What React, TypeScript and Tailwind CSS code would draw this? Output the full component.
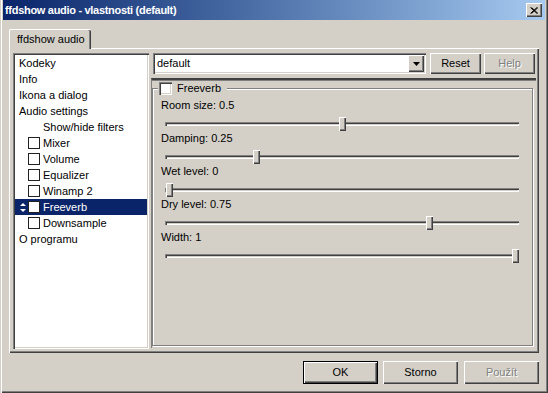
import React from 'react';

const raised =
  'bg-[#d4d0c8] shadow-[inset_1px_1px_0_#fff,inset_-1px_-1px_0_#404040,inset_-2px_-2px_0_#808080]';
const sunken =
  'shadow-[inset_1px_1px_0_#808080,inset_2px_2px_0_#404040,inset_-1px_-1px_0_#fff,inset_-2px_-2px_0_#d4d0c8]';
const disabledText = 'text-[#808080] [text-shadow:1px_1px_0_#fff]';

type Node = { label: string; check?: boolean; indent?: boolean; selected?: boolean };

const tree: Node[] = [
  { label: 'Kodeky' },
  { label: 'Info' },
  { label: 'Ikona a dialog' },
  { label: 'Audio settings' },
  { label: 'Show/hide filters', indent: true },
  { label: 'Mixer', check: true },
  { label: 'Volume', check: true },
  { label: 'Equalizer', check: true },
  { label: 'Winamp 2', check: true },
  { label: 'Freeverb', check: true, selected: true },
  { label: 'Downsample', check: true },
  { label: 'O programu' },
];

const sliders = [
  { label: 'Room size: 0.5', value: 0.5 },
  { label: 'Damping: 0.25', value: 0.25 },
  { label: 'Wet level: 0', value: 0 },
  { label: 'Dry level: 0.75', value: 0.75 },
  { label: 'Width: 1', value: 1 },
];

const TreeRow = ({ node }: { node: Node }) => {
  if (node.check) {
    return (
      <div
        className={
          'h-[16px] flex items-center ' + (node.selected ? 'bg-[#0a246a] text-white' : '')
        }
      >
        <div className="w-[13px] flex justify-end pr-[1px]">
          {node.selected && (
            <svg width="6" height="9" viewBox="0 0 6 9" className="mr-[1px]">
              <path d="M3 0 L6 3 L0 3 Z" fill="#fff" />
              <path d="M0 6 L6 6 L3 9 Z" fill="#fff" />
            </svg>
          )}
        </div>
        <div className="w-[12px] h-[12px] border border-[#222] bg-white" />
        <span className="ml-[3px] leading-[16px]">{node.label}</span>
      </div>
    );
  }
  return (
    <div className={'h-[16px] leading-[16px] ' + (node.indent ? 'pl-[28px]' : 'pl-[4px]')}>
      {node.label}
    </div>
  );
};

const Slider = ({ label, value }: { label: string; value: number }) => (
  <div>
    <div className="h-[13px] leading-[13px] pl-[8px]">{label}</div>
    <div className="relative ml-[12px] w-[354px] h-[20px]">
      <div className={'absolute left-0 right-0 top-[10px] h-[4px] ' + sunken} />
      <div
        className={'absolute top-[5px] w-[7px] h-[14px] ' + raised}
        style={{ left: 1 + Math.round(value * 346) }}
      />
    </div>
  </div>
);

const Button = ({
  label,
  width,
  height,
  disabled,
  isDefault,
  className = '',
}: {
  label: string;
  width: string;
  height: string;
  disabled?: boolean;
  isDefault?: boolean;
  className?: string;
}) => (
  <div
    className={
      'flex items-center justify-center ' +
      width +
      ' ' +
      height +
      ' ' +
      (isDefault ? 'border border-black ' : '') +
      raised +
      ' ' +
      (disabled ? disabledText : '') +
      ' ' +
      className
    }
  >
    {label}
  </div>
);

export default function App() {
  return (
    <div className="w-[548px] h-[393px] bg-[#d4d0c8] text-black text-[11px] font-['Liberation_Sans',Arial,sans-serif] flex flex-col overflow-hidden shadow-[inset_1px_0_0_#d4d0c8,inset_2px_0_0_#fff,inset_-1px_-1px_0_#404040,inset_-2px_-2px_0_#808080]">
      {/* title bar */}
      <div className="mx-[3px] h-[20px] shrink-0 flex items-center bg-gradient-to-r from-[#0a246a] to-[#a6caf0] pl-[2px] pr-[3px]">
        <span className="text-white font-bold text-[11px] leading-[20px] tracking-[-0.3px]">
          ffdshow audio - vlastnosti (default)
        </span>
        <div className={'ml-auto w-[16px] h-[14px] flex items-center justify-center ' + raised}>
          <svg width="8" height="7" viewBox="0 0 8 7">
            <path d="M0.5 0.5 L7 6.5 M1.5 0.5 L8 6.5 M7 0.5 L0.5 6.5 M8 0.5 L1.5 6.5" stroke="#000" strokeWidth="1" />
          </svg>
        </div>
      </div>

      {/* tab */}
      <div className="mt-[9px] ml-[9px] w-[82px] h-[20px] -mb-[1px] relative z-10 bg-[#d4d0c8] border-t border-l border-white rounded-tl-[2px] rounded-tr-[2px] shadow-[inset_-1px_0_0_#404040,inset_-2px_0_0_#808080] pl-[7px] leading-[19px]">
        ffdshow audio
      </div>

      {/* tab page */}
      <div className="ml-[9px] w-[530px] h-[305px] shrink-0 border-t border-l border-white shadow-[inset_-1px_-1px_0_#404040,inset_-2px_-2px_0_#808080] flex items-start pl-[3px] pt-[4px]">
        {/* tree */}
        <div className={'w-[136px] h-[296px] bg-white p-[2px] ' + sunken}>
          {tree.map((n) => (
            <TreeRow key={n.label} node={n} />
          ))}
        </div>

        {/* right side */}
        <div className="ml-[2px] w-[385px] flex flex-col">
          <div className="flex items-start pl-[2px]">
            <div className={'w-[273px] h-[21px] bg-white p-[2px] flex items-center ' + sunken}>
              <span className="pl-[2px] flex-1">default</span>
              <div className={'w-[16px] h-[17px] flex items-center justify-center ' + raised}>
                <svg width="7" height="4" viewBox="0 0 7 4">
                  <path d="M0 0 L7 0 L3.5 4 Z" fill="#000" />
                </svg>
              </div>
            </div>
            <Button label="Reset" width="w-[51px]" height="h-[21px]" className="ml-[4px]" />
            <Button label="Help" width="w-[51px]" height="h-[21px]" className="ml-[3px]" disabled />
          </div>

          <div className="mt-[4px] h-[270px] border-t-2 border-t-[#404040] border-l border-l-[#808080] shadow-[inset_0_1px_0_#808080]">
            {/* group box */}
            <div className="relative mt-[8px] w-[381px] h-[258px] border border-[#808080] shadow-[inset_1px_1px_0_#fff,1px_1px_0_#fff] pt-[10px]">
              <div className="absolute left-[5px] -top-[7px] flex items-center bg-[#d4d0c8] pl-[1px] pr-[6px] h-[13px]">
                <div className={'w-[13px] h-[13px] bg-white ' + sunken} />
                <span className="ml-[5px]">Freeverb</span>
              </div>
              {sliders.map((s) => (
                <Slider key={s.label} label={s.label} value={s.value} />
              ))}
            </div>
          </div>
        </div>
      </div>

      {/* bottom buttons */}
      <div className="mt-[8px] flex pl-[303px]">
        <Button label="OK" width="w-[75px]" height="h-[23px]" isDefault />
        <Button label="Storno" width="w-[75px]" height="h-[23px]" className="ml-[5px]" />
        <Button label="Použít" width="w-[75px]" height="h-[23px]" className="ml-[6px]" disabled />
      </div>
    </div>
  );
}
